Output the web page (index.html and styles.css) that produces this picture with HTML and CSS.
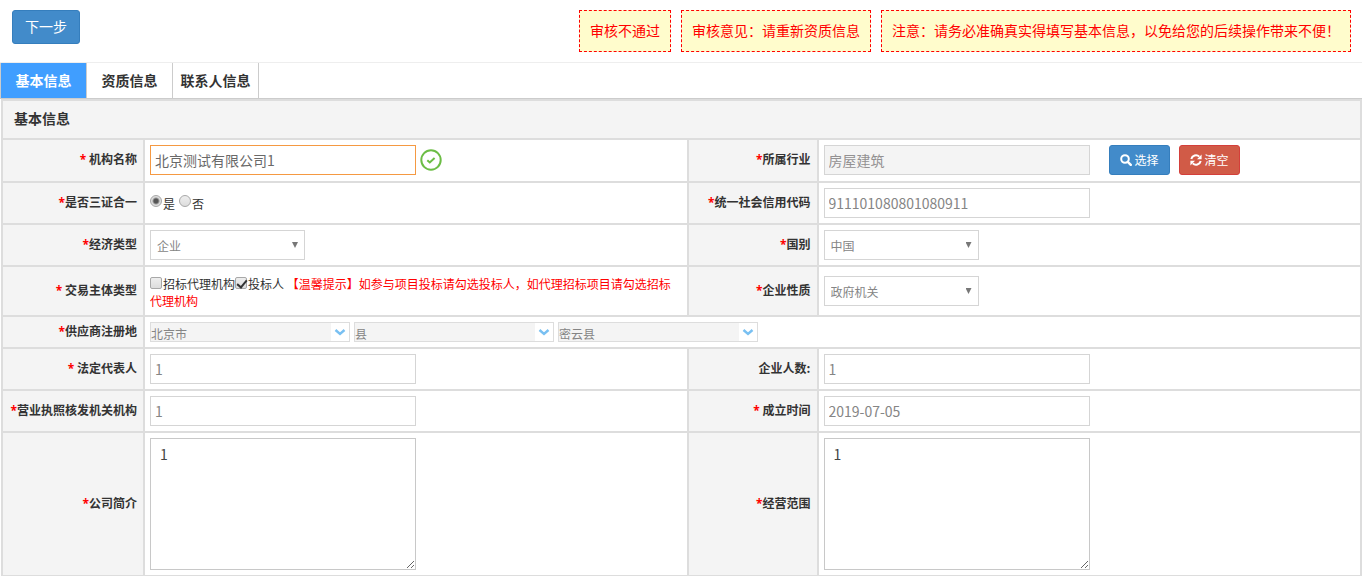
FILE: index.html
```html
<!DOCTYPE html>
<html lang="zh-CN">
<head>
<meta charset="utf-8">
<title>基本信息</title>
<link rel="stylesheet" href="styles.css">
</head>
<body>
<header class="toolbar">
  <button type="button" class="btn btn-primary btn-next">下一步</button>
  <div class="notices">
    <p class="notice">审核不通过</p>
    <p class="notice">审核意见<span class="mark">：</span>请重新资质信息</p>
    <p class="notice">注意<span class="mark">：</span>请务必准确真实得填写基本信息，以免给您的后续操作带来不便<span class="mark">！</span></p>
  </div>
</header>
<nav class="tabs">
  <a href="#basic" class="tab active">基本信息</a>
  <a href="#quality" class="tab">资质信息</a>
  <a href="#contact" class="tab">联系人信息</a>
</nav>
<form id="basic">
<table class="form-table">
  <colgroup>
    <col class="col-left"><col><col class="col-right"><col>
  </colgroup>
  <tr class="row-title"><th colspan="4" class="section">基本信息</th></tr>
  <tr class="row-name">
    <th><label for="org"><i>*</i> 机构名称</label></th>
    <td>
      <div class="line">
        <input class="text focus" id="org" type="text" value="北京测试有限公司1">
        <svg class="ok" viewBox="0 0 22 22" aria-hidden="true"><circle cx="11" cy="11" r="9.7" fill="none" stroke="#6cbd45" stroke-width="2"/><path d="M7.3 11.2l2.5 2.3 4.8-4.4" fill="none" stroke="#6cbd45" stroke-width="2"/></svg>
      </div>
    </td>
    <th><label for="industry"><i>*</i>所属行业</label></th>
    <td>
      <div class="line">
        <input class="text" id="industry" type="text" value="房屋建筑" disabled>
        <div class="actions">
          <button type="button" class="btn btn-primary btn-small"><svg viewBox="0 0 12 12" aria-hidden="true"><circle cx="5" cy="5" r="3.8" fill="none" stroke="#fff" stroke-width="2"/><path d="M7.8 7.8l3 3" stroke="#fff" stroke-width="2.4" stroke-linecap="round"/></svg>选择</button>
          <button type="button" class="btn btn-danger btn-small"><svg viewBox="0 0 12 12" aria-hidden="true"><path d="M1.3 5A4.8 4.8 0 0 1 9.3 2.6M10.7 7A4.8 4.8 0 0 1 2.7 9.4" fill="none" stroke="#fff" stroke-width="2"/><path d="M11.6.6v4.6H7zM.4 11.4V6.8H5z" fill="#fff"/></svg>清空</button>
        </div>
      </div>
    </td>
  </tr>
  <tr class="row">
    <th><i>*</i>是否三证合一</th>
    <td>
      <div class="choices">
        <label class="radio"><input type="radio" name="merged" checked>是</label>
        <label class="radio"><input type="radio" name="merged">否</label>
      </div>
    </td>
    <th><label for="code"><i>*</i>统一社会信用代码</label></th>
    <td><input class="text" id="code" type="text" value="911101080801080911"></td>
  </tr>
  <tr class="row">
    <th><label for="economy"><i>*</i>经济类型</label></th>
    <td><div class="select"><select id="economy"><option>企业</option></select></div></td>
    <th><label for="country"><i>*</i>国别</label></th>
    <td><div class="select"><select id="country"><option>中国</option></select></div></td>
  </tr>
  <tr class="row-type">
    <th><i>*</i> 交易主体类型</th>
    <td class="types"><label><input type="checkbox">招标代理机构</label><label><input type="checkbox" checked>投标人</label> <span class="hint">【温馨提示】如参与项目投标请勾选投标人，如代理招标项目请勾选招标代理机构</span></td>
    <th><label for="nature"><i>*</i>企业性质</label></th>
    <td><div class="select"><select id="nature"><option>政府机关</option></select></div></td>
  </tr>
  <tr class="row-region">
    <th><label for="province"><i>*</i>供应商注册地</label></th>
    <td colspan="3">
      <div class="regions">
        <div class="region"><select id="province" disabled><option>北京市</option></select><svg viewBox="0 0 18 18" aria-hidden="true"><path d="M4.5 7l4.5 4 4.5-4" fill="none" stroke="#79c0f2" stroke-width="2.4"/></svg></div>
        <div class="region"><select aria-label="市" disabled><option>县</option></select><svg viewBox="0 0 18 18" aria-hidden="true"><path d="M4.5 7l4.5 4 4.5-4" fill="none" stroke="#79c0f2" stroke-width="2.4"/></svg></div>
        <div class="region"><select aria-label="区县" disabled><option>密云县</option></select><svg viewBox="0 0 18 18" aria-hidden="true"><path d="M4.5 7l4.5 4 4.5-4" fill="none" stroke="#79c0f2" stroke-width="2.4"/></svg></div>
      </div>
    </td>
  </tr>
  <tr class="row">
    <th><label for="legal"><i>*</i> 法定代表人</label></th>
    <td><input class="text" id="legal" type="text" value="1"></td>
    <th><label for="staff">企业人数:</label></th>
    <td><input class="text" id="staff" type="text" value="1"></td>
  </tr>
  <tr class="row">
    <th><label for="issuer"><i>*</i>营业执照核发机关机构</label></th>
    <td><input class="text" id="issuer" type="text" value="1"></td>
    <th><label for="founded"><i>*</i> 成立时间</label></th>
    <td><input class="text" id="founded" type="text" value="2019-07-05"></td>
  </tr>
  <tr class="row-area">
    <th><label for="intro"><i>*</i>公司简介</label></th>
    <td><textarea id="intro">1</textarea></td>
    <th><label for="scope"><i>*</i>经营范围</label></th>
    <td><textarea id="scope">1</textarea></td>
  </tr>
</table>
</form>
</body>
</html>
```
FILE: styles.css
```css
* { box-sizing: border-box; }
html { scrollbar-width: none; }
body {
  margin: 0;
  background: #fff;
  color: #333;
  font: 12px/17px "Noto Sans CJK SC", "Noto Sans", sans-serif;
}
button, input, select, textarea { font-family: inherit; margin: 0; }

.toolbar {
  display: flex;
  justify-content: space-between;
  align-items: flex-start;
  padding: 10px 11px 10px 12px;
  border-bottom: 1px solid #eee;
}
.notices { display: flex; gap: 10px; }
.notice {
  margin: 0;
  padding: 9px 10px 11px;
  border: 1px dashed #f00;
  background: #fffccc;
  color: #f00;
  font-size: 14px;
  line-height: 20px;
  white-space: nowrap;
}
.mark { font-family: "Noto Sans CJK JP", sans-serif; }

.btn {
  display: inline-flex;
  align-items: center;
  justify-content: center;
  border: 1px solid;
  border-radius: 3px;
  color: #fff;
}
.btn-primary { background: #428bca; border-color: #357ebd; }
.btn-danger { background: #d15b47; border-color: #d43f3a; }
.btn-next { padding: 5px 12px 7px; font-size: 14px; line-height: 20px; }
.btn-small { gap: 3px; padding: 5px 10px; font-size: 12px; line-height: 18px; }
.btn-small svg { width: 12px; height: 12px; }

.tabs {
  display: flex;
  border-left: 1px solid #ccc;
  border-bottom: 1px solid #ccc;
}
.tab {
  min-width: 86px;
  padding: 7px 7px 8px;
  border-right: 1px solid #ccc;
  color: #333;
  font-size: 14px;
  font-weight: bold;
  line-height: 20px;
  text-align: center;
  text-decoration: none;
}
.tab.active { background: #409eff; color: #fff; }

form { padding-left: 1px; }
.form-table {
  width: 100%;
  table-layout: fixed;
  border-spacing: 2px;
  background: #ddd;
}
.col-left { width: 140px; }
.col-right { width: 128px; }
.form-table th, .form-table td { padding: 0 5px; vertical-align: middle; }
.form-table th {
  padding: 0 6px 3px 0;
  background: #f4f4f4;
  text-align: right;
  white-space: nowrap;
}
.form-table td { background: #fff; }
.form-table .section { padding: 0 11px 2px; font-size: 14px; text-align: left; }
.form-table i { color: #f00; font-family: "Noto Sans", sans-serif; font-style: normal; }
.row-title { height: 37px; }
.row-name { height: 41px; }
.form-table .row-name td { padding-top: 5px; vertical-align: top; }
.row { height: 40px; }
.row-type { height: 48px; }
.row-region { height: 30px; }
.row-area { height: 142px; }

.line { display: flex; align-items: center; gap: 4px; }
.actions { display: flex; gap: 9px; padding-left: 15px; }
.ok { width: 22px; height: 22px; }

.text {
  display: block;
  width: 266px;
  height: 30px;
  padding: 0 4px;
  border: 1px solid #d5d5d5;
  background: #fff;
  color: #858585;
  font-size: 14px;
}
.text.focus { border-color: #f59942; color: #696969; }
.text:disabled { background: #f4f4f4; color: #939192; }

textarea {
  display: block;
  width: 266px;
  height: 132px;
  padding: 5px 9px;
  border: 1px solid #c8c8c8;
  background: #fff;
  color: #444;
  font-size: 14px;
  line-height: 20px;
}

.choices { display: flex; gap: 4px; }
.radio { display: flex; }
input[type="radio"], input[type="checkbox"] {
  appearance: none;
  width: 12px;
  height: 12px;
  margin-right: 1px;
  border: 1px solid #a8a8a8;
  background: linear-gradient(#eee, #ddd);
}
input[type="radio"] { border-radius: 50%; }
input[type="radio"]:checked {
  background: radial-gradient(circle, #555 0 2px, #ddd 4px);
}
input[type="checkbox"] { position: relative; border-radius: 2px; }
input[type="checkbox"]:checked::after {
  content: "";
  position: absolute;
  left: 3px;
  top: 0;
  width: 4px;
  height: 8px;
  border: solid #333;
  border-width: 0 2px 2px 0;
  transform: rotate(40deg);
}
.form-table .types { padding-top: 1px; }
.hint { color: #f00; }

.select { position: relative; width: 155px; }
.select::after {
  content: "";
  position: absolute;
  right: 7px;
  top: 12px;
  width: 6px;
  height: 6px;
  background: #777;
  clip-path: polygon(0 0, 100% 0, 50% 100%);
  pointer-events: none;
}
select { appearance: none; display: block; width: 100%; border-radius: 0; font-size: 12px; }
.select select {
  height: 30px;
  padding: 1px 6px 0;
  border: 1px solid #d5d5d5;
  background: #fff;
  color: #858585;
}

.regions { display: flex; gap: 4px; }
.region {
  display: flex;
  width: 200px;
  height: 20px;
  border: 1px solid #ddd;
}
.region select {
  padding: 2px 0 0;
  border: 0;
  background: #f4f4f4;
  color: #858585;
  opacity: 1;
}
.region svg { flex: none; width: 18px; height: 18px; }
```
